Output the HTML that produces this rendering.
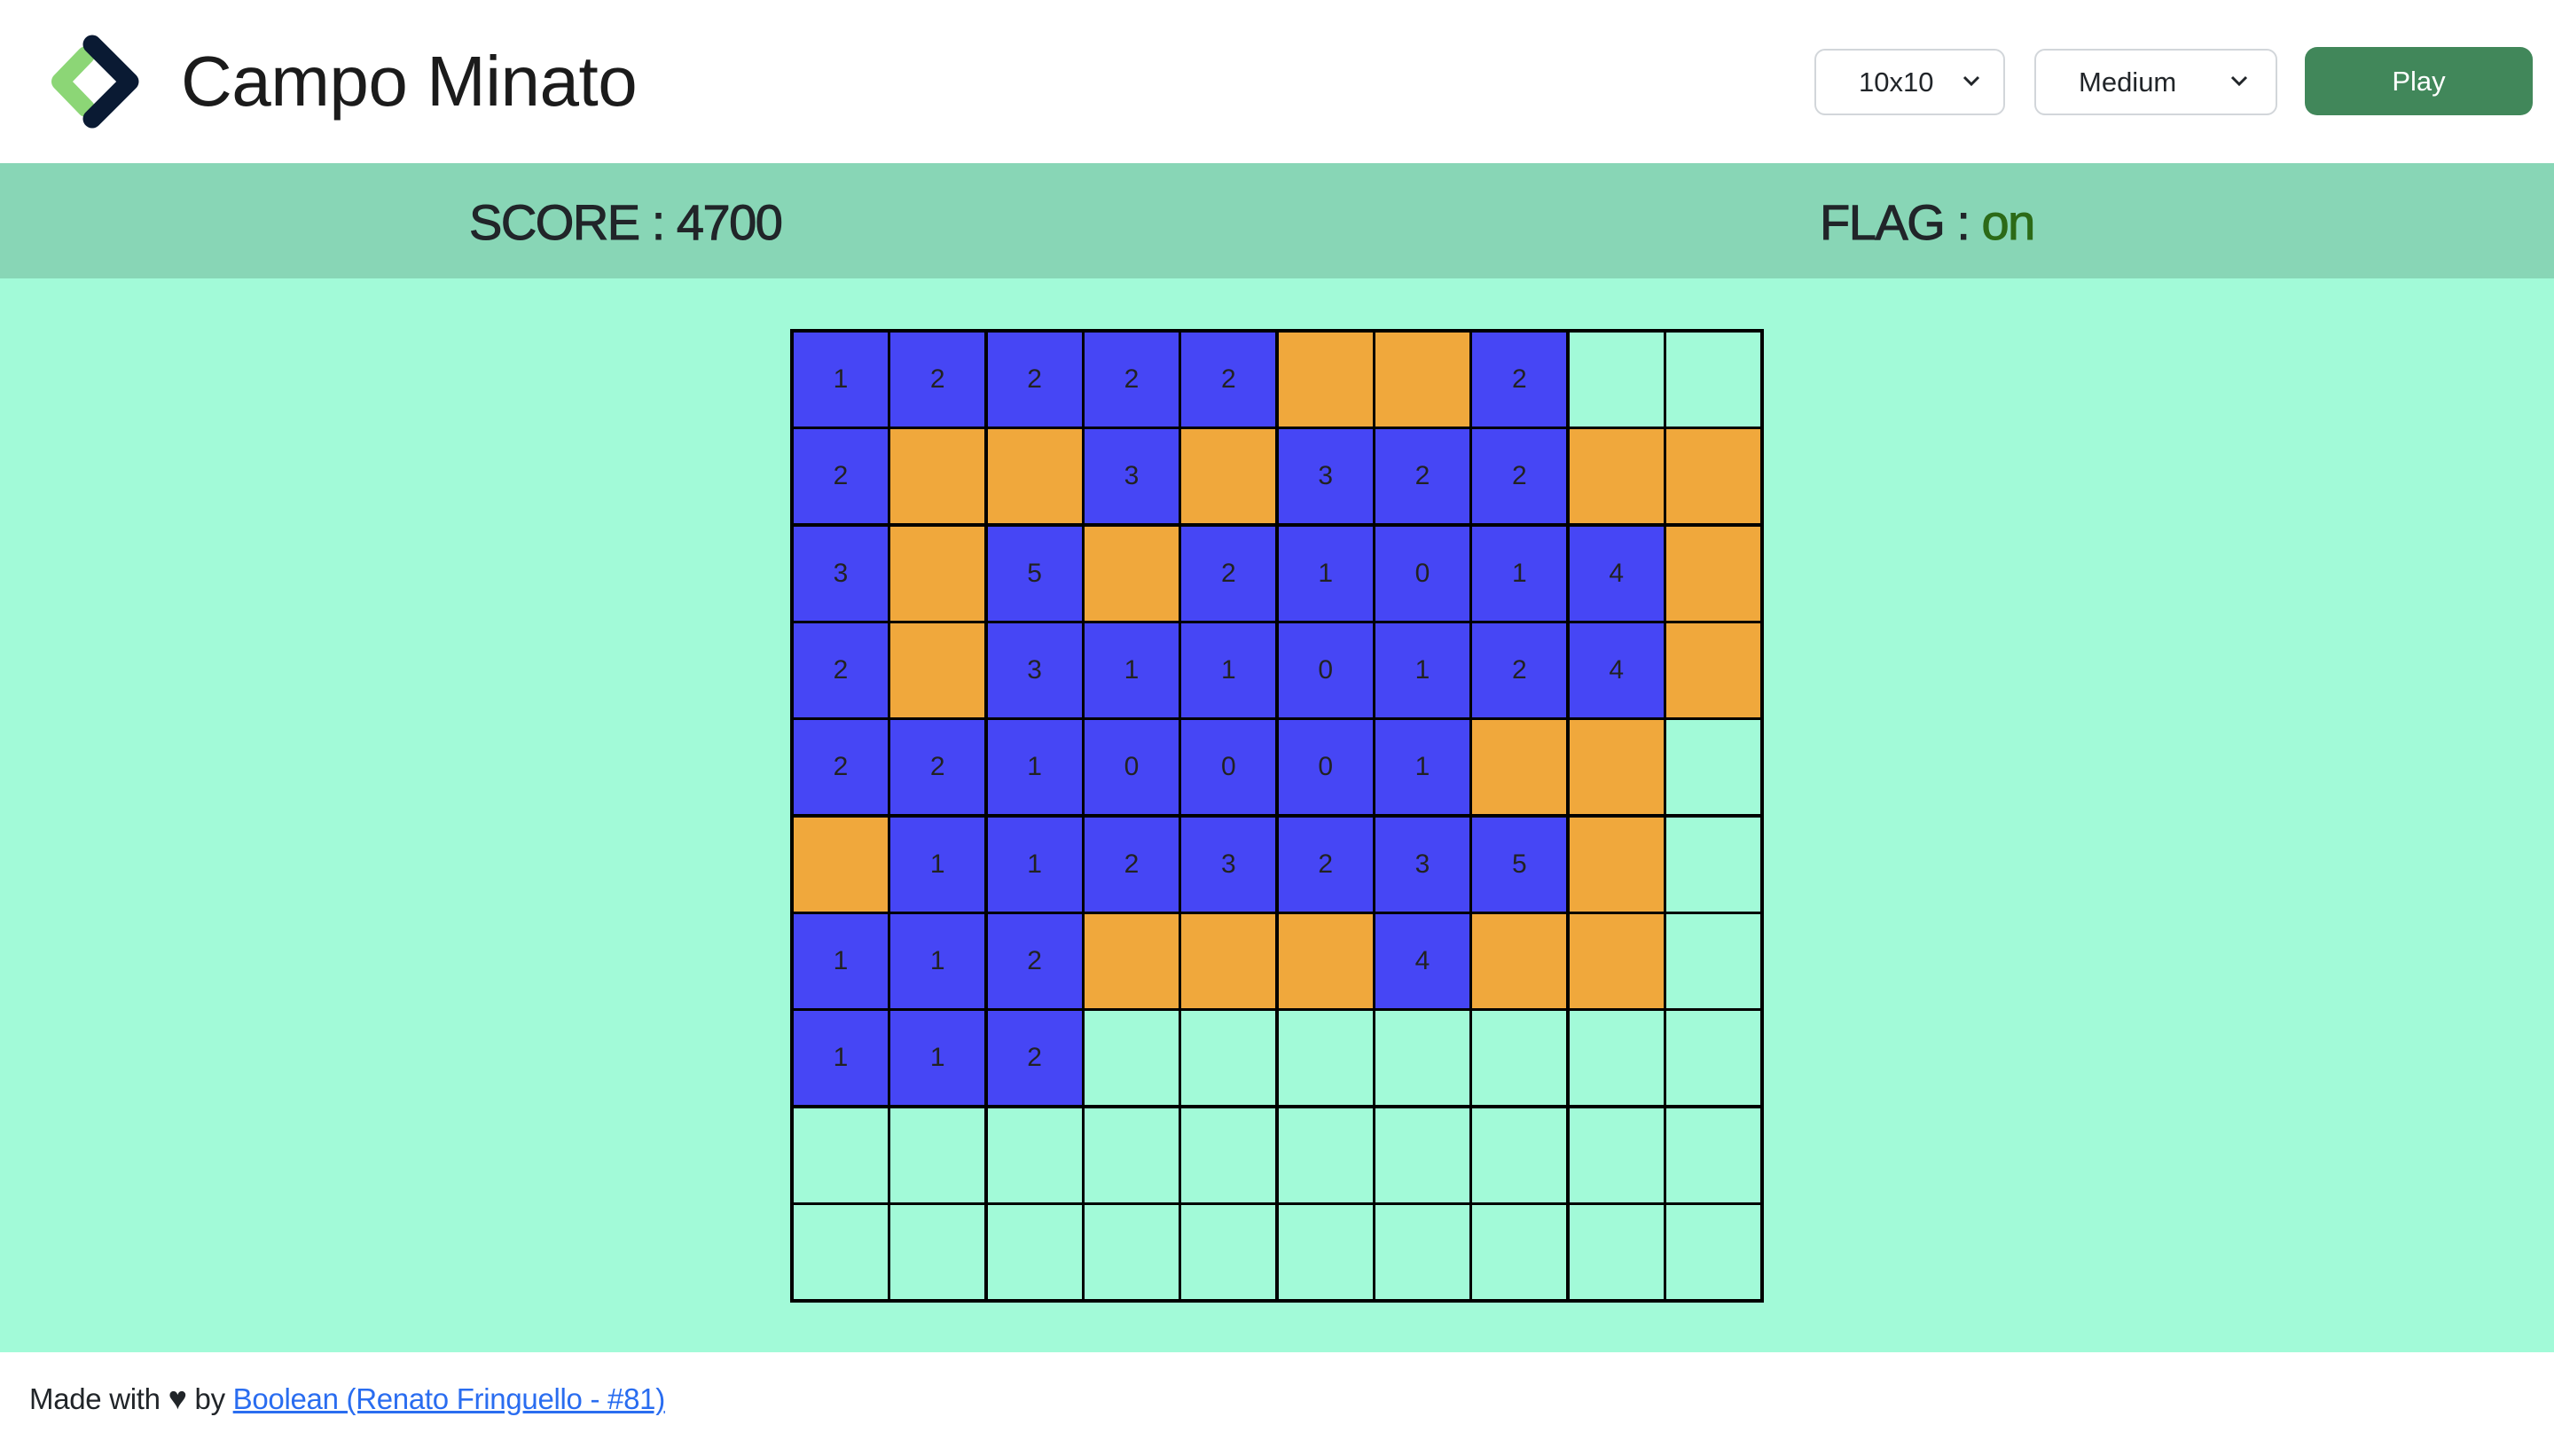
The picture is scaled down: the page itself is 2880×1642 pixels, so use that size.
<!DOCTYPE html>
<html><head><meta charset="utf-8"><style>
*{box-sizing:border-box;margin:0;padding:0}
body{width:2880px;height:1642px;background:#fff;font-family:"Liberation Sans",sans-serif;color:#212529;position:relative;overflow:hidden}
.hdr{position:absolute;left:0;top:0;width:2880px;height:184px;background:#fff}
.title{position:absolute;left:204px;top:42px;font-size:80px;color:#1b1b1b;line-height:100px;letter-spacing:-0.5px}
.sel{position:absolute;top:55px;height:75px;border:2px solid #d2d6da;border-radius:12px;background:#fff;font-size:31px;line-height:71px;color:#212529}
.sel span{position:absolute}
.sel svg{position:absolute;top:27px}
.play{position:absolute;left:2599px;top:53px;width:257px;height:77px;background:#41875a;border-radius:14px;color:#fff;font-size:31px;line-height:77px;text-align:center}
.bar{position:absolute;left:0;top:184px;width:2880px;height:130px;background:#88d6b6;font-size:56px;line-height:134px;letter-spacing:-1.5px;-webkit-text-stroke:1px #212529}
.main{position:absolute;left:0;top:314px;width:2880px;height:1211px;background:#a2fad8}
.grid{position:absolute;left:891px;top:371px;width:1098px;height:1098px;background:#000;padding:4px;display:grid;grid-template-columns:repeat(10,1fr);grid-template-rows:repeat(10,1fr);gap:3.5px}
.grid div{background:#a2fad8;font-size:30px;color:#222;display:flex;align-items:center;justify-content:center}
.grid .b{background:#4646f5}
.grid .o{background:#f0a83c}
.foot{position:absolute;left:33px;top:1556px;font-size:33px;color:#212529;letter-spacing:-0.3px}
.foot a{color:#2a6df0;text-decoration:underline}
</style></head><body>
<div class="hdr">
<svg style="position:absolute;left:0;top:0" width="200" height="184">
<polyline points="97,62 68,92 97,122" fill="none" stroke="#8cd676" stroke-width="20" stroke-linejoin="round" stroke-linecap="round"/>
<polyline points="104,50 146,92 104,134" fill="none" stroke="#0a1a33" stroke-width="21" stroke-linejoin="round" stroke-linecap="round"/>
</svg>
<div class="title">Campo Minato</div>
<div class="sel" style="left:2046px;width:215px"><span style="left:48px">10x10</span><svg style="left:164px" width="22" height="16"><polyline points="3,3 11,11 19,3" fill="none" stroke="#212529" stroke-width="3"/></svg></div>
<div class="sel" style="left:2294px;width:274px"><span style="left:48px">Medium</span><svg style="left:218px" width="22" height="16"><polyline points="3,3 11,11 19,3" fill="none" stroke="#212529" stroke-width="3"/></svg></div>
<div class="play">Play</div>
</div>
<div class="bar"><span style="position:absolute;left:529px">SCORE : 4700</span><span style="position:absolute;left:2052px">FLAG : <span style="color:#2c6a17;-webkit-text-stroke:1px #2c6a17">on</span></span></div>
<div class="main"></div>
<div class="grid">
<div class="b">1</div><div class="b">2</div><div class="b">2</div><div class="b">2</div><div class="b">2</div><div class="o"></div><div class="o"></div><div class="b">2</div><div></div><div></div>
<div class="b">2</div><div class="o"></div><div class="o"></div><div class="b">3</div><div class="o"></div><div class="b">3</div><div class="b">2</div><div class="b">2</div><div class="o"></div><div class="o"></div>
<div class="b">3</div><div class="o"></div><div class="b">5</div><div class="o"></div><div class="b">2</div><div class="b">1</div><div class="b">0</div><div class="b">1</div><div class="b">4</div><div class="o"></div>
<div class="b">2</div><div class="o"></div><div class="b">3</div><div class="b">1</div><div class="b">1</div><div class="b">0</div><div class="b">1</div><div class="b">2</div><div class="b">4</div><div class="o"></div>
<div class="b">2</div><div class="b">2</div><div class="b">1</div><div class="b">0</div><div class="b">0</div><div class="b">0</div><div class="b">1</div><div class="o"></div><div class="o"></div><div></div>
<div class="o"></div><div class="b">1</div><div class="b">1</div><div class="b">2</div><div class="b">3</div><div class="b">2</div><div class="b">3</div><div class="b">5</div><div class="o"></div><div></div>
<div class="b">1</div><div class="b">1</div><div class="b">2</div><div class="o"></div><div class="o"></div><div class="o"></div><div class="b">4</div><div class="o"></div><div class="o"></div><div></div>
<div class="b">1</div><div class="b">1</div><div class="b">2</div><div></div><div></div><div></div><div></div><div></div><div></div><div></div>
<div></div><div></div><div></div><div></div><div></div><div></div><div></div><div></div><div></div><div></div>
<div></div><div></div><div></div><div></div><div></div><div></div><div></div><div></div><div></div><div></div>
</div>
<div class="foot">Made with <span style="font-size:36px">&#9829;</span> by <a>Boolean (Renato Fringuello - #81)</a></div>
</body></html>
